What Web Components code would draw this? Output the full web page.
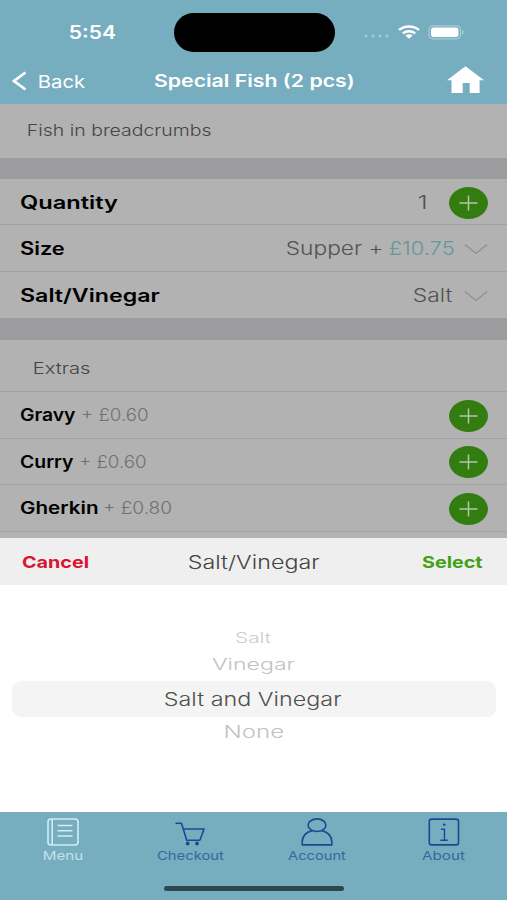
<!DOCTYPE html>
<html lang="en">
<head>
<meta charset="utf-8">
<title>Special Fish (2 pcs)</title>
<style>
  body { margin: 0; }
</style>
</head>
<body>
<order-app></order-app>

<script>
const icons = {
  back: [15, 20, '<path d="M13.5 1.5L2 10l11.5 8.5" fill="none" stroke="#fff" stroke-width="2.7"/>'],
  home: [37, 28, '<path d="M18.5 .3L37 14.2h-4.4v12.9h-9.9V17h-7v10.1H4.5V14.2H0z" fill="#fff"/>'],
  dots: [26, 4, '<g fill="#a5cad6"><circle cx="2" cy="2" r="1.5"/><circle cx="9" cy="2" r="1.5"/><circle cx="16" cy="2" r="1.5"/><circle cx="23" cy="2" r="1.5"/></g>'],
  wifi: [22, 14, '<g fill="none" stroke="#fff" stroke-width="2.5"><path d="M1 4.9C6.6 .2 15.4 .2 21 4.9"/><path d="M4.8 8.4c3.5-2.9 8.9-2.9 12.4 0"/></g><path d="M7.3 10.6c2.1-1.8 5.3-1.8 7.4 0L11 13.7z" fill="#fff"/>'],
  battery: [37, 15, '<rect x="1" y=".8" width="31.5" height="13" rx="4" fill="none" stroke="#a9ceda" stroke-width="1.2"/><rect x="3" y="2.5" width="27.5" height="9.6" rx="2.8" fill="#fff"/><path d="M34 5c2.3.7 2.3 4 0 4.7z" fill="#a9ceda"/>'],
  plus: [39, 32, '<ellipse cx="19.5" cy="16" rx="19.5" ry="16" fill="#337c10"/><path d="M10.5 16h18M19.5 8.5v15" fill="none" stroke="#b2c6a8" stroke-width="1.5"/>'],
  down: [24, 12, '<path d="M1 1.5l11 9 11-9" fill="none" stroke="#8f8f90" stroke-width="1.3"/>'],
  menu: [32, 28, '<g fill="none" stroke="#d3edf6" stroke-width="1.6"><rect x="1" y="1" width="30" height="26" rx="3"/><path d="M5.2 1v26M10.5 7.5h15M10.5 12.7h15M10.5 18h15"/></g>'],
  cart: [32, 28, '<g fill="none" stroke="#164d92" stroke-width="1.6" stroke-linejoin="round"><path d="M1.5 5.3h6l5.2 17h13.4M9 11h21l-4.1 11.3"/></g><circle cx="13.7" cy="25.5" r="1.9" fill="#164d92"/><circle cx="23" cy="25.5" r="1.9" fill="#164d92"/>'],
  account: [32, 28, '<g fill="none" stroke="#164d92" stroke-width="1.6" stroke-linejoin="round"><ellipse cx="16" cy="7.2" rx="8.9" ry="6.3"/><path d="M11.3 12.6C4.8 14.2 1.2 18.2 1.2 24v2.9h29.6V24c0-5.8-3.6-9.8-10.1-11.4"/></g>'],
  about: [32, 28, '<rect x="1.3" y="1.1" width="29.2" height="25.8" rx="2.5" fill="none" stroke="#164d92" stroke-width="1.6"/><path d="M13 11.2h3.5v11M12.4 22.3h7.4" fill="none" stroke="#164d92" stroke-width="1.4"/><ellipse cx="16.2" cy="6.6" rx="1.4" ry="1.2" fill="#164d92"/>']
}

class AppIcon extends HTMLElement {
  constructor() {
    super()
    this.attachShadow({mode: 'open'})
  }

  connectedCallback() {
    const [width, height, shape] = icons[this.getAttribute('name')]
    this.shadowRoot.innerHTML = `
      <style>
        :host { display: block; flex: none; }
        svg { display: block; }
      </style>
      <svg width="${width}" height="${height}" viewBox="0 0 ${width} ${height}" aria-hidden="true">${shape}</svg>
    `
  }
}

// Wide lettering: stretches its label so the ink spans `width` pixels
class WideText extends HTMLElement {
  constructor() {
    super()
    this.attachShadow({mode: 'open'})
  }

  connectedCallback() {
    const width = Number(this.getAttribute('width'))
    const size = this.getAttribute('size') || 18
    const weight = this.getAttribute('weight') || 400
    const context = document.createElement('canvas').getContext('2d')
    context.font = `${weight} ${size}px Inter, sans-serif`
    const metrics = context.measureText(this.textContent)
    const ink = metrics.actualBoundingBoxLeft + metrics.actualBoundingBoxRight
    const scale = width / ink

    this.shadowRoot.innerHTML = `
      <style>
        :host { display: block; flex: none; width: ${width}px; }
        span {
          display: block;
          width: max-content;
          font: ${weight} ${size}px/1.2 Inter, sans-serif;
          white-space: nowrap;
          transform-origin: 0 50%;
          transform: translateX(${metrics.actualBoundingBoxLeft * scale}px) scaleX(${scale});
        }
      </style>
      <span><slot></slot></span>
    `
  }
}

class AppHeader extends HTMLElement {
  constructor() {
    super()
    this.attachShadow({mode: 'open'})
    this.shadowRoot.innerHTML = `
      <style>
        :host { display: block; height: 104px; background: #76adbf; color: #fff; }
        .status, nav {
          display: grid;
          grid-template-columns: 1fr auto 1fr;
          align-items: center;
          box-sizing: border-box;
        }
        .status { height: 52px; padding: 12px 42px 0 70px; }
        .status wide-text { margin-top: 1px; }
        .island { width: 161px; height: 39px; margin-left: -27px; border-radius: 20px; background: #000; }
        .signals { display: flex; justify-content: flex-end; align-items: center; gap: 8px; }
        .signals app-icon:first-child { margin-top: 8px; }
        nav { height: 52px; padding: 6px 23px 0 12px; }
        .back { display: flex; align-items: center; gap: 12px; }
        ::slotted(*) { margin-left: 10px; }
        .home { justify-self: end; margin-bottom: 2px; }
      </style>
      <div class="status">
        <wide-text width="46" size="18" weight="600">5:54</wide-text>
        <div class="island"></div>
        <div class="signals">
          <app-icon name="dots"></app-icon>
          <app-icon name="wifi"></app-icon>
          <app-icon name="battery"></app-icon>
        </div>
      </div>
      <nav>
        <div class="back">
          <app-icon name="back"></app-icon>
          <wide-text width="46.5" size="17.5">Back</wide-text>
        </div>
        <slot></slot>
        <app-icon class="home" name="home"></app-icon>
      </nav>
    `
  }
}

class OptionRow extends HTMLElement {
  constructor() {
    super()
    this.attachShadow({mode: 'open'})
    this.shadowRoot.innerHTML = `
      <style>
        :host {
          display: flex;
          align-items: center;
          box-sizing: border-box;
          height: 46.5px;
          padding: 1.5px 19px 0 20px;
          border-bottom: 1px solid #a0a0a1;
          color: #000;
        }
        .value {
          display: flex;
          align-items: center;
          gap: 8px;
          margin-left: auto;
          color: #525252;
        }
      </style>
      <slot name="label"></slot>
      <slot name="price"></slot>
      <div class="value"><slot></slot></div>
    `
  }
}

class PickerSheet extends HTMLElement {
  constructor() {
    super()
    this.attachShadow({mode: 'open'})
    this.shadowRoot.innerHTML = `
      <style>
        :host { display: block; height: 274px; background: #fff; }
        header {
          display: flex;
          justify-content: space-between;
          align-items: center;
          box-sizing: border-box;
          height: 47px;
          padding: 2px 25px 0 21.5px;
          background: #efefef;
          color: #444;
        }
        .cancel { color: #d8152f; }
        .select { color: #43a017; }
        .wheel {
          display: flex;
          flex-direction: column;
          align-items: center;
          padding-top: 40px;
          color: #c2c2c2;
        }
        .item { display: flex; align-items: center; justify-content: center; height: 30px; }
        .item.first { height: 25px; color: #ccc; }
        .item.current {
          width: 484px;
          height: 36px;
          margin: 1px 0 0;
          border-radius: 9px;
          background: #f4f4f4;
          color: #505050;
        }
      </style>
      <header>
        <wide-text class="cancel" width="66.5" size="16.5" weight="700">Cancel</wide-text>
        <wide-text width="131" size="18.5" weight="300">Salt/Vinegar</wide-text>
        <wide-text class="select" width="60.5" size="16.5" weight="700">Select</wide-text>
      </header>
      <div class="wheel">
        <div class="item first"><wide-text width="37" size="14.5" weight="300">Salt</wide-text></div>
        <div class="item"><wide-text width="83" size="16.5" weight="300">Vinegar</wide-text></div>
        <div class="item current"><wide-text width="177" size="18.5" weight="300">Salt and Vinegar</wide-text></div>
        <div class="item"><wide-text width="58" size="17" weight="300">None</wide-text></div>
      </div>
    `
  }
}

class TabItem extends HTMLElement {
  constructor() {
    super()
    this.attachShadow({mode: 'open'})
  }

  connectedCallback() {
    this.shadowRoot.innerHTML = `
      <style>
        :host { display: flex; flex-direction: column; align-items: center; gap: 3px; color: #34699f; }
        :host([active]) { color: #c3e1ed; }
      </style>
      <app-icon name="${this.getAttribute('icon')}"></app-icon>
      <slot></slot>
    `
  }
}

class TabBar extends HTMLElement {
  constructor() {
    super()
    this.attachShadow({mode: 'open'})
    this.shadowRoot.innerHTML = `
      <style>
        :host { display: block; box-sizing: border-box; height: 88px; padding-top: 6px; background: #76adbf; }
        .tabs { display: grid; grid-template-columns: repeat(4, 1fr); height: 68px; }
        .indicator { width: 180px; height: 5px; margin: 0 auto; border-radius: 3px; background: #2f474f; }
      </style>
      <div class="tabs"><slot></slot></div>
      <div class="indicator"></div>
    `
  }
}

class OrderApp extends HTMLElement {
  constructor() {
    super()
    this.attachShadow({mode: 'open'})
    this.shadowRoot.innerHTML = `
      <style>
        :host {
          display: flex;
          flex-direction: column;
          width: 507px;
          height: 900px;
          overflow: hidden;
          background: #b2b2b2;
        }
        main { height: 434px; overflow: hidden; color: #454545; }
        .note { display: flex; align-items: center; box-sizing: border-box; height: 54px; padding-left: 27.5px; }
        .band { height: 20.5px; background: #9c9c9e; }
        .band.second { height: 22px; }
        .heading {
          display: flex;
          align-items: center;
          box-sizing: border-box;
          height: 52.5px;
          padding: 6px 0 0 34px;
          border-bottom: 1px solid #a0a0a1;
        }
        .quantity { padding-top: 2.5px; }
        .last { height: 46px; padding-top: 2px; border-bottom: 0; }
        .qty { margin-right: 15px; }
        .amount { color: #63979c; }
        .price { margin-left: 6px; color: #707070; }
      </style>
      <app-header><wide-text width="199" size="17" weight="600">Special Fish (2 pcs)</wide-text></app-header>
      <main>
        <div class="note"><wide-text width="183.5" size="15.5" weight="300">Fish in breadcrumbs</wide-text></div>
        <div class="band"></div>
        <option-row class="quantity">
          <wide-text slot="label" width="98.5" weight="600">Quantity</wide-text>
          <wide-text class="qty" width="7" size="18.5" weight="300">1</wide-text>
          <app-icon name="plus"></app-icon>
        </option-row>
        <option-row>
          <wide-text slot="label" width="44" weight="600">Size</wide-text>
          <wide-text width="95" size="18.5" weight="300">Supper +</wide-text>
          <wide-text class="amount" width="63.5" size="18.5" weight="300">£10.75</wide-text>
          <app-icon name="down" style="margin-left: 3px"></app-icon>
        </option-row>
        <option-row class="last">
          <wide-text slot="label" width="139.5" weight="600">Salt/Vinegar</wide-text>
          <wide-text width="39" size="18.5" weight="300">Salt</wide-text>
          <app-icon name="down" style="margin-left: 3px"></app-icon>
        </option-row>
        <div class="band second"></div>
        <div class="heading"><wide-text width="56" size="16" weight="300">Extras</wide-text></div>
        <option-row>
          <wide-text slot="label" width="55.5" size="17" weight="600">Gravy</wide-text>
          <wide-text slot="price" class="price" width="66" size="17" weight="300">+ £0.60</wide-text>
          <app-icon name="plus"></app-icon>
        </option-row>
        <option-row>
          <wide-text slot="label" width="53.5" size="17" weight="600">Curry</wide-text>
          <wide-text slot="price" class="price" width="66" size="17" weight="300">+ £0.60</wide-text>
          <app-icon name="plus"></app-icon>
        </option-row>
        <option-row>
          <wide-text slot="label" width="78" size="17" weight="600">Gherkin</wide-text>
          <wide-text slot="price" class="price" width="67.5" size="17" weight="300">+ £0.80</wide-text>
          <app-icon name="plus"></app-icon>
        </option-row>
      </main>
      <picker-sheet></picker-sheet>
      <tab-bar>
        <tab-item icon="menu" active><wide-text width="39" size="12" weight="400">Menu</wide-text></tab-item>
        <tab-item icon="cart"><wide-text width="67" size="12" weight="400">Checkout</wide-text></tab-item>
        <tab-item icon="account"><wide-text width="58" size="12" weight="400">Account</wide-text></tab-item>
        <tab-item icon="about"><wide-text width="43" size="12" weight="400">About</wide-text></tab-item>
      </tab-bar>
    `
  }
}

window.customElements.define('app-icon', AppIcon)
window.customElements.define('wide-text', WideText)
window.customElements.define('app-header', AppHeader)
window.customElements.define('option-row', OptionRow)
window.customElements.define('picker-sheet', PickerSheet)
window.customElements.define('tab-item', TabItem)
window.customElements.define('tab-bar', TabBar)
window.customElements.define('order-app', OrderApp)
</script>
</body>
</html>
